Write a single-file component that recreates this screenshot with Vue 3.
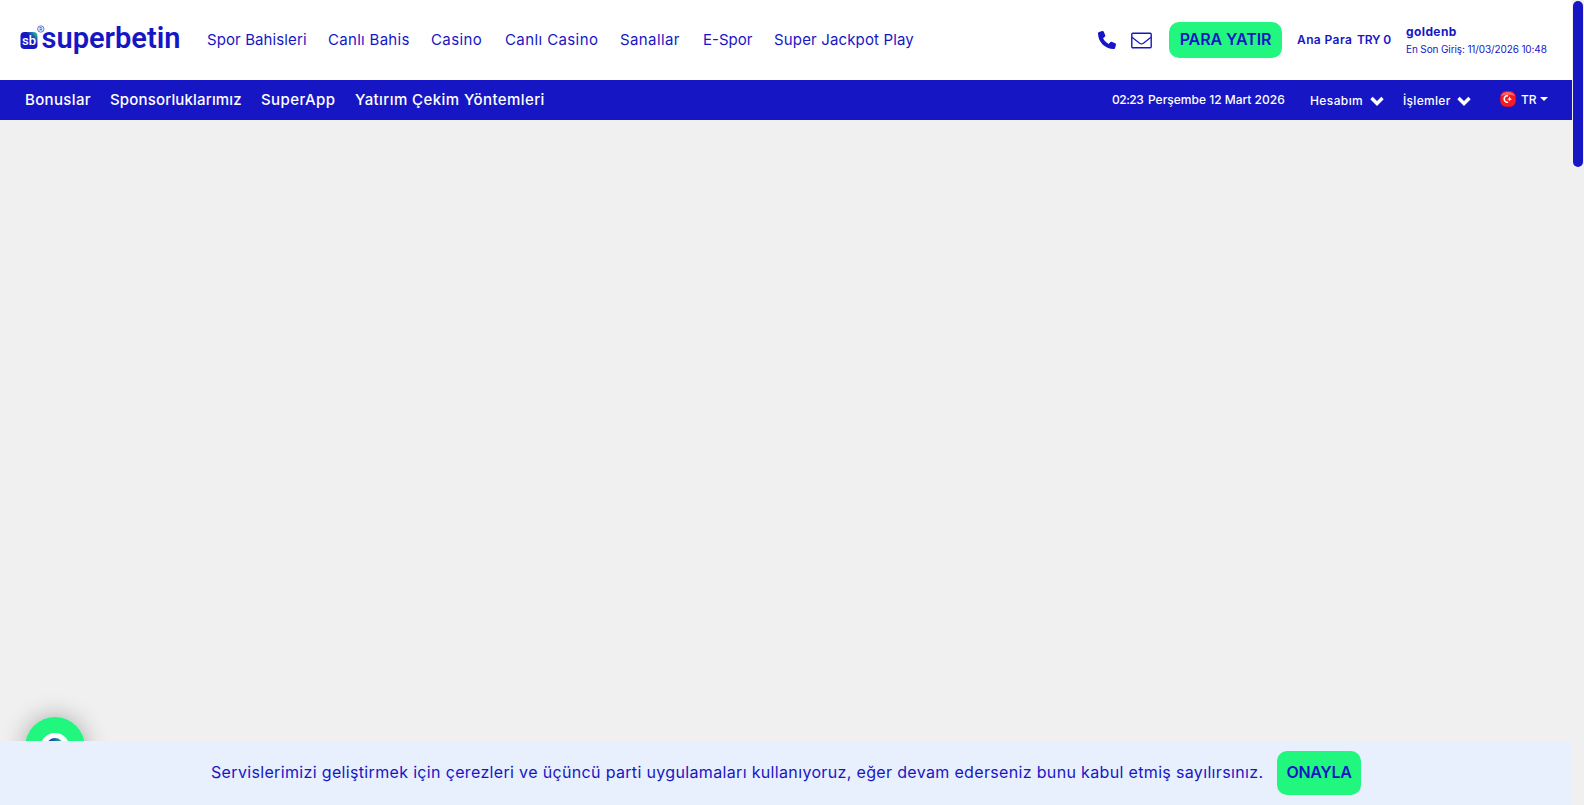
<script setup>
import { ref } from 'vue'

const mainLinks = [
  { label: 'Spor Bahisleri', width: 99, spacing: 0.1 },
  { label: 'Canlı Bahis', width: 81, spacing: 0.3 },
  { label: 'Casino', width: 52, spacing: 0.4 },
  { label: 'Canlı Casino', width: 93, spacing: 0.4 },
  { label: 'Sanallar', width: 61, spacing: 0.4 },
  { label: 'E-Spor', width: 49, spacing: 0 },
  { label: 'Super Jackpot Play', width: 140, spacing: 0.15 },
]

const subLinks = [
  { label: 'Bonuslar', width: 65, spacing: 0.35 },
  { label: 'Sponsorluklarımız', width: 131, spacing: 0.17 },
  { label: 'SuperApp', width: 74, spacing: 0.4 },
  { label: 'Yatırım Çekim Yöntemleri', width: 190, spacing: 0.42 },
]

const showCookies = ref(true)

const linkStyle = (link) => ({
  width: link.width + 'px',
  letterSpacing: link.spacing + 'px',
})
</script>

<template>
  <div class="page">
    <header class="header">
      <a class="logo" href="#">
        <svg width="160" height="36" viewBox="0 0 160 36">
          <defs>
            <linearGradient id="badge" x1="0.35" y1="0.6" x2="1" y2="0">
              <stop offset="0.4" stop-color="#1716c5" />
              <stop offset="1" stop-color="#2ee68f" />
            </linearGradient>
          </defs>
          <rect x="0.5" y="10" width="17" height="17" rx="4" fill="url(#badge)" />
          <text x="2" y="22.5" class="logo-badge" textLength="14" lengthAdjust="spacingAndGlyphs">sb</text>
          <circle cx="20.8" cy="7" r="3.2" fill="none" stroke="#1716c5" stroke-width="0.6" />
          <text x="19.2" y="9" class="logo-mark">R</text>
          <text x="21.5" y="26" class="logo-text" textLength="139" lengthAdjust="spacingAndGlyphs">superbetin</text>
        </svg>
      </a>
      <nav class="main-nav">
        <a v-for="link in mainLinks" :key="link.label" href="#" :style="linkStyle(link)">{{ link.label }}</a>
      </nav>
      <div class="account">
        <svg class="phone" width="18" height="18" viewBox="0 0 512 512">
          <path fill="currentColor" d="M164.900 24.600c-7.700-18.600-28-28.500-47.400-23.200l-88 24C12.100 30.200 0 46 0 64c0 247.400 200.600 448 448 448 18 0 33.800-12.100 38.600-29.500l24-88c5.300-19.400-4.600-39.700-23.200-47.400l-96-40c-16.300-6.800-35.200-2.100-46.300 11.600L304.700 368C234.300 334.700 177.300 277.700 144 207.300l49.300-40.300c13.700-11.200 18.400-30 11.600-46.300z" />
        </svg>
        <svg class="mail" width="21" height="17" viewBox="0 0 21 17">
          <rect x="0.8" y="1.300" width="19.400" height="14.400" rx="1" fill="none" stroke="currentColor" stroke-width="1.400" />
          <path d="M1 5.200 L8.600 11.200 Q10.500 12.500 12.400 11.200 L20 5.200" fill="none" stroke="currentColor" stroke-width="1.200" />
        </svg>
        <button class="deposit">PARA YATIR</button>
        <div class="balance"><span class="wallet">Ana Para</span><span class="amount">TRY 0</span></div>
        <div class="user">
          <b>goldenb</b>
          <small>En Son Giriş: 11/03/2026 10:48</small>
        </div>
      </div>
    </header>

    <div class="sub-header">
      <nav class="sub-nav">
        <a v-for="link in subLinks" :key="link.label" href="#" :style="linkStyle(link)">{{ link.label }}</a>
      </nav>
      <div class="tools">
        <span class="time">02:23</span>
        <span class="date">Perşembe 12 Mart 2026</span>
        <a class="menu profile" href="#">
          <span>Hesabım</span>
          <svg width="14" height="10" viewBox="0 0 14 10"><path d="M1.500 2 L7 7.500 L12.500 2" fill="none" stroke="#fff" stroke-width="3.400" /></svg>
        </a>
        <a class="menu actions" href="#">
          <span>İşlemler</span>
          <svg width="14" height="10" viewBox="0 0 14 10"><path d="M1.500 2 L7 7.500 L12.500 2" fill="none" stroke="#fff" stroke-width="3.400" /></svg>
        </a>
        <a class="lang" href="#">
          <svg width="16" height="16" viewBox="0 0 16 16">
            <rect x="0.300" y="0.300" width="15.400" height="15.400" rx="5.500" fill="#f91a20" />
            <path d="M1 5 Q3 1 8 1 T15 5 Q8 2.500 1 5" fill="#ff6765" />
            <path d="M8 5 A2.800 3.200 0 1 0 8 11" fill="none" stroke="#fff" stroke-width="1.600" />
            <path d="M9.500 5.500 L10.400 7.300 L12 8.500 L10.400 8.700 L9.500 10.200 L8.600 8.700 L7.200 8.300 L8.700 7.400z" fill="#fff" />
          </svg>
          <span>TR</span>
          <i class="caret"></i>
        </a>
      </div>
    </div>

    <div class="scrollbar"></div>

    <div class="chat">
      <svg width="60" height="60" viewBox="0 0 60 60">
        <defs>
          <linearGradient id="agent">
            <stop offset="0.1" stop-color="#1b25c0" />
            <stop offset="0.900" stop-color="#21b985" />
          </linearGradient>
        </defs>
        <circle cx="30" cy="30" r="30" fill="#21f67f" />
        <circle cx="30" cy="30.600" r="14.600" fill="#fff" />
        <circle cx="30" cy="29.500" r="8.500" fill="url(#agent)" />
      </svg>
    </div>

    <div v-if="showCookies" class="cookies">
      <p>Servislerimizi geliştirmek için çerezleri ve üçüncü parti uygulamaları kullanıyoruz, eğer devam ederseniz bunu kabul etmiş sayılırsınız.</p>
      <button @click="showCookies = false">ONAYLA</button>
    </div>
  </div>
</template>

<style>
body {
  margin: 0;
  overflow: hidden;
}
</style>

<style scoped>
.page {
  position: relative;
  box-sizing: border-box;
  height: 100vh;
  padding-right: 12px;
  overflow: hidden;
  background: #f0f0f0;
  color: #1716c5;
  font-family: Inter, "Open Sans", sans-serif;
}

a {
  color: inherit;
  text-decoration: none;
}

a, span, b, small, p, button {
  white-space: nowrap;
}

button {
  border: none;
  border-radius: 10px;
  padding: 0 0 2px;
  background: #21f67f;
  color: #1716c5;
  font-family: inherit;
  font-size: 16px;
  font-weight: 600;
  cursor: pointer;
}

svg {
  display: block;
  flex-shrink: 0;
}

.header {
  display: flex;
  align-items: center;
  height: 80px;
  box-sizing: border-box;
  padding: 0 25px 0 20px;
  background: #fff;
}

.logo {
  width: 187px;
}

.logo svg {
  overflow: visible;
}

.logo-badge {
  fill: #fff;
  font: 500 12.5px Roboto, sans-serif;
}

.logo-mark {
  fill: #1716c5;
  font: 5px Roboto, sans-serif;
}

.logo-text {
  fill: #1716c5;
  font: 600 29px Roboto, sans-serif;
}

.main-nav {
  display: flex;
  gap: 22px;
  padding-bottom: 2px;
  font-size: 15px;
}

.account {
  display: flex;
  align-items: center;
  margin-left: auto;
}

.mail {
  margin: 1px 17px 0 15px;
}

.deposit {
  width: 113px;
  height: 36px;
  letter-spacing: -0.1px;
}

.balance {
  display: flex;
  width: 94px;
  margin: 0 15px;
  padding-bottom: 2px;
  font-size: 12px;
  font-weight: 600;
}

.wallet {
  width: 61px;
  letter-spacing: 0.4px;
}

.amount {
  letter-spacing: -0.2px;
}

.user {
  display: flex;
  flex-direction: column;
  width: 141px;
}

.user b {
  font-size: 12px;
  line-height: 18px;
  letter-spacing: 0.4px;
}

.user small {
  font-size: 10px;
  line-height: 17px;
  letter-spacing: -0.12px;
}

.sub-header {
  display: flex;
  align-items: center;
  height: 40px;
  box-sizing: border-box;
  padding: 0 24px 0 25px;
  background: #1716c5;
  color: #fff;
}

.sub-nav {
  display: flex;
  gap: 20px;
  padding-bottom: 2px;
  font-size: 15px;
  font-weight: 500;
}

.tools {
  display: flex;
  align-items: center;
  margin-left: auto;
  padding-bottom: 2px;
  font-size: 12px;
  font-weight: 500;
}

.time {
  width: 36px;
  letter-spacing: -0.5px;
}

.date {
  width: 137px;
}

.menu {
  display: flex;
  align-items: center;
  margin-top: 2px;
}

.menu svg {
  margin-top: 2px;
}

.profile {
  margin-left: 25px;
}

.profile span {
  width: 60px;
  letter-spacing: 0.4px;
}

.actions {
  margin: 2px 29px 0 19px;
}

.actions span {
  width: 54px;
  letter-spacing: 0.3px;
}

.lang {
  display: flex;
  align-items: center;
}

.lang span {
  width: 19px;
  margin-left: 5px;
}

.caret {
  border: 4px solid transparent;
  border-top-color: #fff;
  border-bottom: 0;
}

.scrollbar {
  position: absolute;
  top: 1px;
  right: 1px;
  width: 10px;
  height: 166px;
  border-radius: 5px;
  background: #1716c5;
}

.chat {
  position: absolute;
  left: 25px;
  bottom: 28px;
  width: 60px;
  height: 60px;
  border-radius: 50%;
  box-shadow: 0 0 24px rgba(0, 0, 0, 0.3);
}

.cookies {
  position: absolute;
  left: 0;
  right: 12px;
  bottom: 0;
  display: flex;
  align-items: center;
  justify-content: center;
  height: 64px;
  background: #e8effd;
}

.cookies p {
  width: 1052px;
  margin: 0 14px 0 0;
  padding-bottom: 2px;
  font-size: 16px;
  letter-spacing: 0.34px;
}

.cookies button {
  width: 84px;
  height: 44px;
  letter-spacing: -0.3px;
}
</style>
